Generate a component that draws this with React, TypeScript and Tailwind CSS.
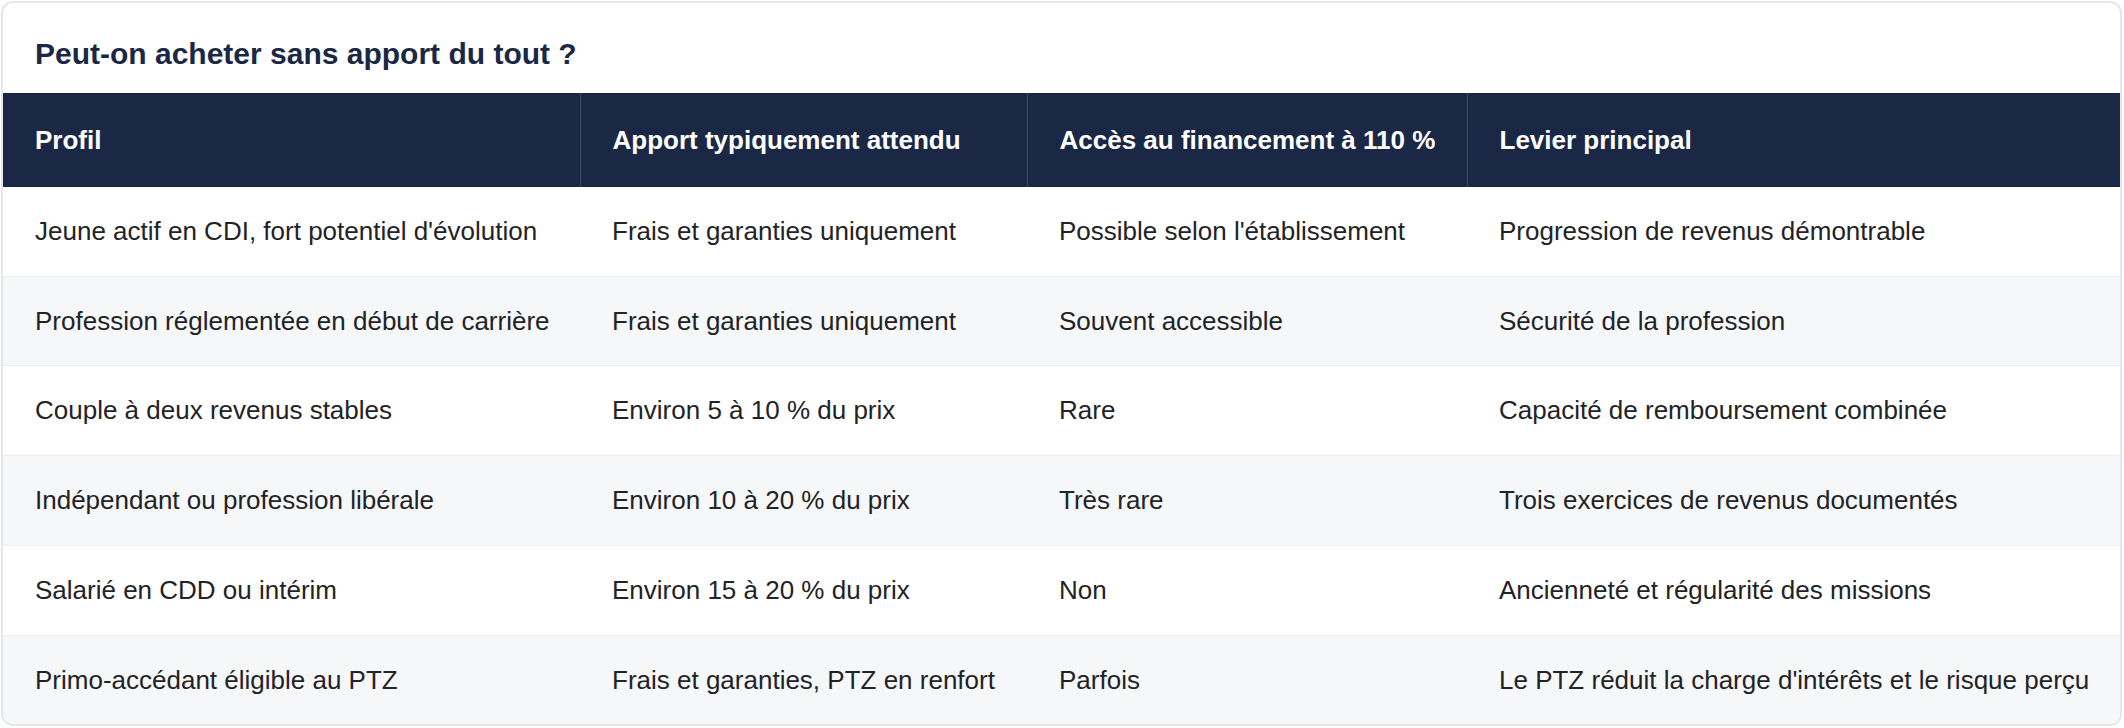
const headers = ['Profil', 'Apport typiquement attendu', 'Accès au financement à 110 %', 'Levier principal']

const rows: string[][] = [
  ['Jeune actif en CDI, fort potentiel d\'évolution', 'Frais et garanties uniquement', 'Possible selon l\'établissement', 'Progression de revenus démontrable'],
  ['Profession réglementée en début de carrière', 'Frais et garanties uniquement', 'Souvent accessible', 'Sécurité de la profession'],
  ['Couple à deux revenus stables', 'Environ 5 à 10 % du prix', 'Rare', 'Capacité de remboursement combinée'],
  ['Indépendant ou profession libérale', 'Environ 10 à 20 % du prix', 'Très rare', 'Trois exercices de revenus documentés'],
  ['Salarié en CDD ou intérim', 'Environ 15 à 20 % du prix', 'Non', 'Ancienneté et régularité des missions'],
  ['Primo-accédant éligible au PTZ', 'Frais et garanties, PTZ en renfort', 'Parfois', 'Le PTZ réduit la charge d\'intérêts et le risque perçu'],
]

export default function App() {
  return (
    <div className="bg-white w-[2124px] h-[728px] pt-px pl-px font-['Liberation_Sans',Arial,sans-serif]">
      <div className="w-[2121px] border-2 border-[#e4e7eb] rounded-[12px] overflow-hidden bg-white">
        <h2 className="pl-[32px] pt-[33px] pb-[21px] text-[30px] leading-[36px] font-bold text-[#1b2845]">
          Peut-on acheter sans apport du tout ?
        </h2>
        <table className="w-full border-collapse table-fixed text-left">
          <colgroup>
            <col className="w-[577px]" />
            <col className="w-[447px]" />
            <col className="w-[440px]" />
            <col />
          </colgroup>
          <thead>
            <tr className="bg-[#1b2845]">
              {headers.map((h, i) => (
                <th
                  key={h}
                  className={`px-[32px] py-[28px] text-[26px] leading-[38px] font-bold text-white whitespace-nowrap ${i > 0 ? 'border-l border-[#3e4a66]' : ''}`}
                >
                  {h}
                </th>
              ))}
            </tr>
          </thead>
          <tbody>
            {rows.map((r, ri) => (
              <tr key={ri} className={`${ri % 2 === 1 ? 'bg-[#f6f7f9]' : 'bg-white'} ${ri < rows.length - 1 ? 'border-b border-[#eceef1]' : ''}`}>
                {r.map((c, ci) => (
                  <td key={ci} className="px-[32px] py-[25px] text-[26px] leading-[38.7px] text-[#222326] whitespace-nowrap">
                    {c}
                  </td>
                ))}
              </tr>
            ))}
          </tbody>
        </table>
      </div>
    </div>
  )
}
